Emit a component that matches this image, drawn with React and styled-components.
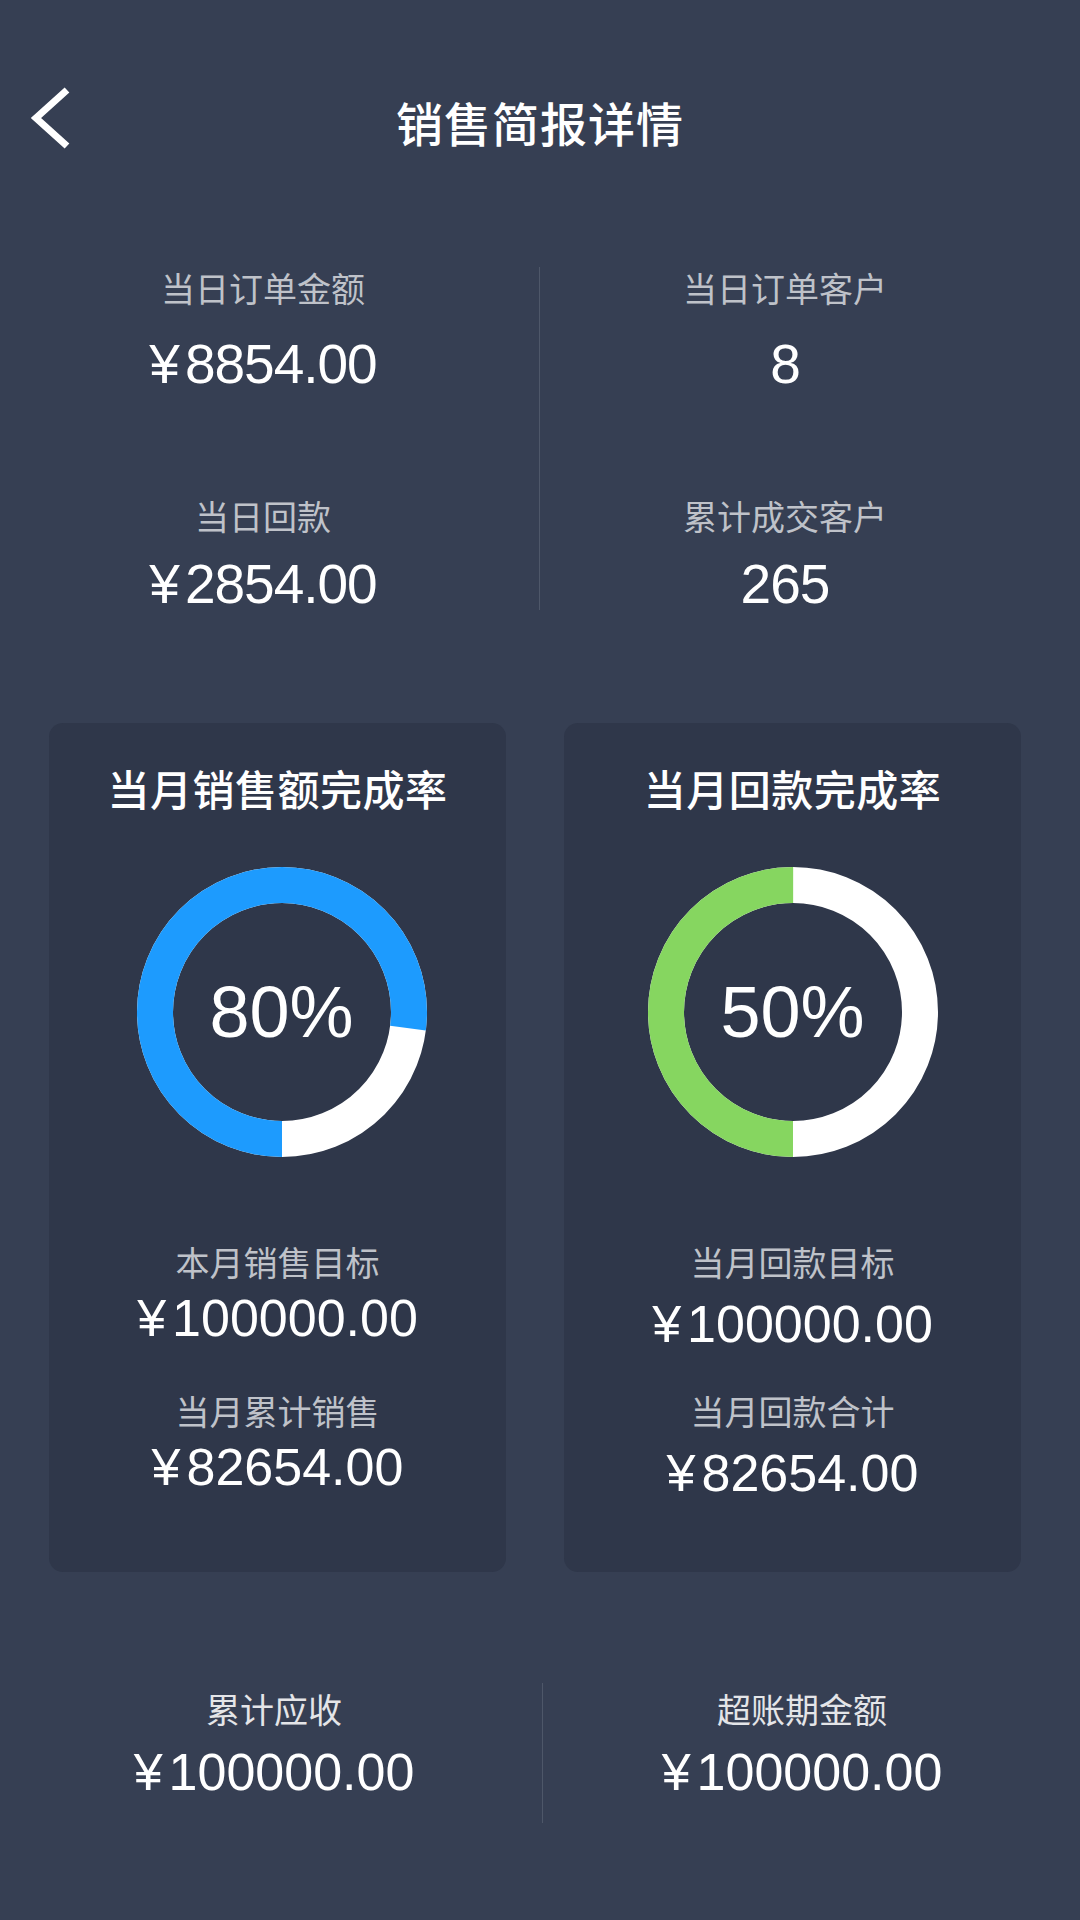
import React from 'react';
import styled, { createGlobalStyle } from 'styled-components';

const GlobalStyle = createGlobalStyle`
  html, body {
    margin: 0;
    padding: 0;
    background: #363f53;
  }
  * {
    box-sizing: border-box;
  }
`;

const daily = [
  { label: '当日订单金额', value: '8854.00', money: true },
  { label: '当日订单客户', value: '8' },
  { label: '当日回款', value: '2854.00', money: true },
  { label: '累计成交客户', value: '265' },
];

const cards = [
  {
    title: '当月销售额完成率',
    percent: '80%',
    arc: 0.77,
    color: '#1d9bfe',
    shift: 4,
    valueGap: 11,
    blockGap: 47,
    rows: [
      { label: '本月销售目标', value: '100000.00' },
      { label: '当月累计销售', value: '82654.00' },
    ],
  },
  {
    title: '当月回款完成率',
    percent: '50%',
    arc: 0.5,
    color: '#86d660',
    shift: 0,
    valueGap: 17,
    blockGap: 41,
    rows: [
      { label: '当月回款目标', value: '100000.00' },
      { label: '当月回款合计', value: '82654.00' },
    ],
  },
];

function Money({ value }) {
  return (
    <>
      <Yen>¥</Yen>
      {value}
    </>
  );
}

function Donut({ arc, color, percent, shift }) {
  const size = 292;
  const r = 127;
  const c = 2 * Math.PI * r;
  const mid = size / 2;

  return (
    <DonutWrap $shift={shift}>
      <svg width={size} height={size} viewBox={`0 0 ${size} ${size}`}>
        <circle cx={mid} cy={mid} r={r} fill="none" stroke="#ffffff" strokeWidth="36" />
        <circle
          cx={mid}
          cy={mid}
          r={r}
          fill="none"
          stroke={color}
          strokeWidth="36"
          strokeDasharray={`${c * arc} ${c}`}
          transform={`rotate(90 ${mid} ${mid})`}
        />
      </svg>
      <Percent>{percent}</Percent>
    </DonutWrap>
  );
}

function App() {
  return (
    <Page>
      <GlobalStyle />
      <Header>
        <BackButton>
          <svg width="44" height="64" viewBox="0 0 44 64">
            <polyline
              points="37,3 6,31 37,59"
              fill="none"
              stroke="#ffffff"
              strokeWidth="7"
              strokeLinejoin="miter"
            />
          </svg>
        </BackButton>
        <Title>销售简报详情</Title>
        <span />
      </Header>

      <DailyGrid>
        {daily.map((item, i) => (
          <Stat key={item.label} col={i % 2 === 0 ? 1 : 3} row={i < 2 ? 1 : 2} $gap={i < 2 ? 29 : 21}>
            <Label>{item.label}</Label>
            <BigValue>{item.money ? <Money value={item.value} /> : item.value}</BigValue>
          </Stat>
        ))}
        <Divider $height={343} />
      </DailyGrid>

      <CardRow>
        {cards.map((card) => (
          <Card key={card.title}>
            <CardTitle>{card.title}</CardTitle>
            <Donut arc={card.arc} color={card.color} percent={card.percent} shift={card.shift} />
            <CardStats $gap={card.blockGap}>
              {card.rows.map((row) => (
                <CardStat key={row.label} $gap={card.valueGap}>
                  <Label>{row.label}</Label>
                  <CardValue>
                    <Money value={row.value} />
                  </CardValue>
                </CardStat>
              ))}
            </CardStats>
          </Card>
        ))}
      </CardRow>

      <TotalsGrid>
        <Total $pad={12}>
          <Label $light>累计应收</Label>
          <TotalValue>
            <Money value="100000.00" />
          </TotalValue>
        </Total>
        <Divider $height={140} />
        <Total>
          <Label $light>超账期金额</Label>
          <TotalValue>
            <Money value="100000.00" />
          </TotalValue>
        </Total>
      </TotalsGrid>
    </Page>
  );
}

export default App;

const Page = styled.div`
  width: 1080px;
  min-height: 1920px;
  background: #363f53;
  color: #ffffff;
  font-family: 'Liberation Sans', 'Noto Sans CJK SC', sans-serif;
  overflow: hidden;
`;

const Header = styled.div`
  height: 244px;
  display: grid;
  grid-template-columns: 1fr auto 1fr;
  align-items: center;
`;

const BackButton = styled.div`
  padding-left: 30px;
  display: flex;
  align-items: center;
  height: 64px;
  margin-top: -6px;
`;

const Title = styled.h1`
  margin: 0;
  font-family: 'Noto Sans CJK SC', sans-serif;
  font-size: 47px;
  font-weight: 500;
  line-height: 56px;
  letter-spacing: 1px;
`;

const DailyGrid = styled.div`
  margin-top: 23px;
  display: grid;
  grid-template-columns: 526px 1px 464px;
  grid-template-rows: auto auto;
  column-gap: 13px;
  row-gap: 104px;
`;

const Stat = styled.div`
  grid-column: ${(p) => p.col};
  grid-row: ${(p) => p.row};
  display: flex;
  flex-direction: column;
  align-items: center;
  gap: ${(p) => p.$gap}px;
`;

const Divider = styled.div`
  grid-column: 2;
  grid-row: 1 / 3;
  width: 1px;
  height: ${(p) => p.$height}px;
  align-self: start;
  background: #4e5769;
`;

const Label = styled.div`
  font-family: 'Noto Sans CJK SC', sans-serif;
  font-size: 34px;
  line-height: 41px;
  color: ${(p) => (p.$light ? '#e4e5e8' : '#bfc2c9')};
  white-space: nowrap;
`;

const Yen = styled.span`
  margin-right: 6px;
`;

const BigValue = styled.div`
  font-size: 55px;
  line-height: 54px;
  letter-spacing: -1px;
  color: #ffffff;
  white-space: nowrap;
`;

const CardRow = styled.div`
  margin-top: 112px;
  padding: 0 59px 0 49px;
  display: grid;
  grid-template-columns: 1fr 1fr;
  column-gap: 58px;
`;

const Card = styled.div`
  height: 849px;
  background: #2f374a;
  border-radius: 14px;
  padding-top: 40px;
  display: flex;
  flex-direction: column;
  align-items: center;
`;

const CardTitle = styled.div`
  font-family: 'Noto Sans CJK SC', sans-serif;
  font-size: 42px;
  font-weight: 500;
  line-height: 50px;
  letter-spacing: 0.5px;
  color: #ffffff;
`;

const DonutWrap = styled.div`
  position: relative;
  width: 292px;
  height: 292px;
  margin-top: 53px;
  margin-left: ${(p) => p.$shift * 2}px;

  svg {
    display: block;
  }
`;

const Percent = styled.div`
  position: absolute;
  inset: 0;
  display: flex;
  align-items: center;
  justify-content: center;
  font-size: 72px;
  color: #ffffff;
`;

const CardStats = styled.div`
  margin-top: 83px;
  display: flex;
  flex-direction: column;
  align-items: center;
  gap: ${(p) => p.$gap}px;
`;

const CardStat = styled.div`
  display: flex;
  flex-direction: column;
  align-items: center;
  gap: ${(p) => p.$gap}px;
`;

const CardValue = styled.div`
  font-size: 52px;
  line-height: 50px;
  white-space: nowrap;
`;

const TotalsGrid = styled.div`
  margin-top: 111px;
  display: grid;
  grid-template-columns: 536px 1px 506px;
  column-gap: 6px;
  align-items: start;
`;

const Total = styled.div`
  padding-top: 5px;
  padding-left: ${(p) => p.$pad || 0}px;
  display: flex;
  flex-direction: column;
  align-items: center;
  gap: 17px;
`;

const TotalValue = styled.div`
  font-size: 52px;
  line-height: 52px;
  white-space: nowrap;
`;
